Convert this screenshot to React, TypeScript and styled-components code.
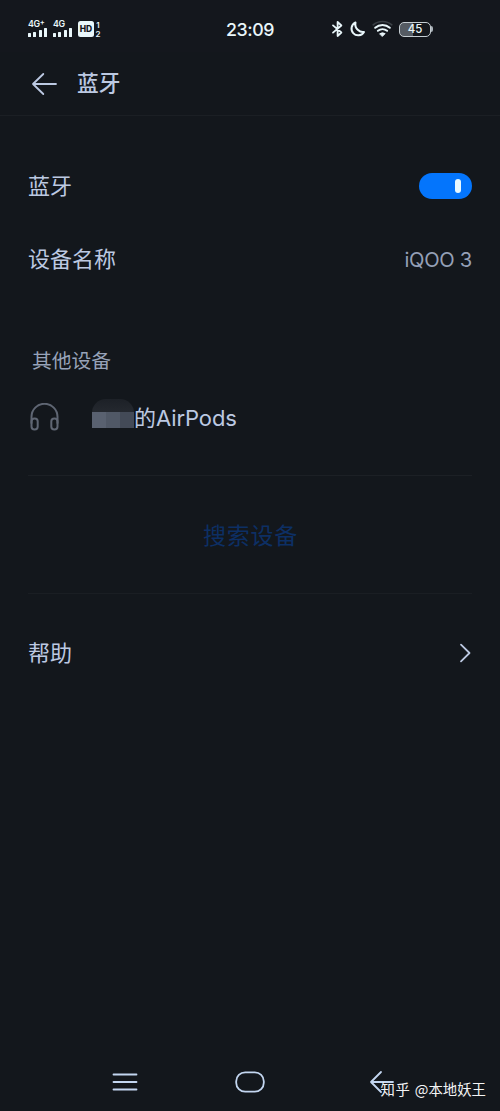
import React from "react";
import styled, { createGlobalStyle } from "styled-components";

const GlobalStyle = createGlobalStyle`
  * { box-sizing: border-box; }
  body { margin: 0; background: #13171c; }
`;

const Screen = styled.div`
  position: relative;
  display: flex;
  flex-direction: column;
  width: 500px;
  height: 1111px;
  overflow: hidden;
  background: #13171c;
  color: #bcc9e2;
  font-family: Inter, "Noto Sans CJK SC", sans-serif;
  white-space: nowrap;
`;

const StatusBar = styled.header`
  display: grid;
  grid-template-columns: 199px 102px 199px;
  align-items: center;
  height: 52px;
  padding-top: 6px;
  background: #14171d;
  color: #e9f6fa;
`;

const StatusGroup = styled.div<{ $start: number }>`
  display: flex;
  align-items: center;
  padding-left: ${(p) => p.$start}px;
`;

const Signal = styled.div`
  display: flex;
  flex-direction: column;
  width: 25px;
  height: 18px;
`;

const Network = styled.span`
  height: 8px;
  font-size: 8.8px;
  font-weight: 600;
  line-height: 7px;
  letter-spacing: -0.3px;
`;

const Plus = styled.sup`
  font-size: 7.5px;
  line-height: 0;
  vertical-align: 2px;
`;

const Bars = styled.div`
  display: flex;
  align-items: flex-end;
  gap: 2.6px;
  height: 9px;
`;

const Bar = styled.i<{ $h: number }>`
  width: 2.8px;
  height: ${(p) => p.$h}px;
  border-radius: 0.5px;
  background: #e9f6fa;
`;

const HdBadge = styled.span`
  width: 16px;
  height: 16px;
  border-radius: 2.5px;
  background: #e9f6fa;
  color: #14171d;
  font-size: 8.5px;
  font-weight: 800;
  line-height: 16px;
  text-align: center;
`;

const SimNumbers = styled.span`
  display: flex;
  flex-direction: column;
  gap: 1px;
  width: 6px;
  margin-left: 1px;
  font-size: 8px;
  font-weight: 600;
  line-height: 8px;
  text-align: center;
`;

const Clock = styled.time`
  padding-top: 1px;
  font-size: 17.8px;
  font-weight: 500;
  line-height: 24px;
  letter-spacing: -0.4px;
  text-align: center;
`;

const Battery = styled.div`
  display: flex;
  align-items: center;
  margin-left: 6px;
`;

const BatteryBody = styled.span`
  width: 32px;
  height: 15px;
  border: 1.5px solid #c5cdd2;
  border-radius: 5px;
  background: linear-gradient(90deg, #555b63 0 45%, #14171d 45%);
  font-size: 11.5px;
  font-weight: 500;
  line-height: 13px;
  text-align: center;
`;

const BatteryTip = styled.i`
  width: 2px;
  height: 6px;
  border-radius: 0 2px 2px 0;
  background: #a9b1b8;
`;

const TitleBar = styled.div`
  display: flex;
  align-items: center;
  gap: 19px;
  height: 64px;
  padding: 0 0 0 31px;
  border-bottom: 1px solid #1b1f24;
`;

const Title = styled.h1`
  margin: 0;
  padding-bottom: 2px;
  font-size: 21.7px;
  font-weight: 500;
  line-height: 32px;
`;

const Content = styled.main`
  flex: 1;
  padding: 34px 28px 0;
`;

const Row = styled.div<{ $height: number }>`
  display: flex;
  align-items: center;
  justify-content: space-between;
  height: ${(p) => p.$height}px;
`;

const Label = styled.span`
  font-size: 22px;
  line-height: 32px;
`;

const DeviceName = styled(Label)`
  letter-spacing: -0.08px;
`;

const Value = styled.span`
  padding-top: 2px;
  color: #95a0b7;
  font-size: 20.2px;
  line-height: 30px;
  letter-spacing: -0.3px;
`;

const Switch = styled.button`
  display: flex;
  align-items: center;
  justify-content: flex-end;
  width: 53px;
  height: 26px;
  padding: 0 11px;
  border: 0;
  border-radius: 13px;
  background: #0475fc;
`;

const Thumb = styled.i`
  width: 6px;
  height: 14px;
  border-radius: 3px;
  background: #e9f9ff;
`;

const SectionTitle = styled.h2`
  margin: 51px 0 0;
  padding-left: 4px;
  color: #97a3b9;
  font-size: 19.8px;
  font-weight: 400;
  line-height: 30px;
`;

const Device = styled.div`
  display: flex;
  align-items: center;
  height: 100px;
  padding: 0 0 15px 2px;
  border-bottom: 1px solid #1c2025;
`;

const HiddenName = styled.span`
  display: flex;
  align-items: flex-end;
  width: 42px;
  height: 29px;
  margin: 0 0 9px 33px;
  border-radius: 14px 14px 0 0;
  background: linear-gradient(#1d2127, #252930 50%, transparent 50%);
`;

const Mosaic = styled.i<{ $tone: string }>`
  flex: 1;
  height: 16px;
  background: ${(p) => p.$tone};
`;

const Search = styled.button`
  display: block;
  width: 100%;
  height: 118px;
  padding: 0 0 1px 1px;
  border: 0;
  border-bottom: 1px solid #1a1e23;
  background: transparent;
  color: #0d2f64;
  font: inherit;
  font-size: 23px;
  letter-spacing: 0.7px;
`;

const NavBar = styled.nav`
  display: flex;
  align-items: center;
  justify-content: space-between;
  height: 58px;
  padding: 0 105px 0 112px;
`;

const Watermark = styled.span`
  position: absolute;
  right: 14px;
  bottom: 12px;
  color: #f3f4f5;
  font-family: "Noto Sans CJK SC", sans-serif;
  font-size: 14.4px;
  line-height: 20px;
  word-spacing: 1px;
`;

const WatermarkBrand = styled.span`
  letter-spacing: 0.7px;
`;

const Icon = styled.svg<{ $gap?: number }>`
  display: block;
  flex: none;
  margin-left: ${(p) => p.$gap ?? 0}px;
  fill: none;
  stroke: currentColor;
  stroke-linecap: round;
  stroke-linejoin: round;
`;

const NavIcon = styled(Icon)`
  color: #c3d6f0;
`;

const HomeIcon = styled(NavIcon)`
  margin-right: 7px;
`;

const HeadphoneIcon = styled(Icon)`
  margin-bottom: 2px;
  color: #5f6673;
`;

function SignalMeter({ plus }: { plus?: boolean }) {
  return (
    <Signal>
      <Network>4G{plus && <Plus>+</Plus>}</Network>
      <Bars>
        {[4, 5.5, 7.5, 9].map((h) => <Bar key={h} $h={h} />)}
      </Bars>
    </Signal>
  );
}

export default function App() {
  return (
    <>
      <GlobalStyle />
      <Screen>
        <StatusBar>
          <StatusGroup $start={28}>
            <SignalMeter plus />
            <SignalMeter />
            <HdBadge>HD</HdBadge>
            <SimNumbers><span>1</span><span>2</span></SimNumbers>
          </StatusGroup>
          <Clock>23:09</Clock>
          <StatusGroup $start={30}>
            <Icon width="13" height="18" viewBox="0 0 13 18" strokeWidth="1.8">
              <path d="M2 5.4 10.4 12.5 6.6 16V2L10.4 5.5 2 12.6" />
            </Icon>
            <Icon $gap={5} width="17" height="18" viewBox="0 0 17 18" strokeWidth="2">
              <path d="M6.5 2.5A6.7 6.7 0 1 0 15 12C10.9 12.8 5.2 8.4 6.5 2.5Z" />
            </Icon>
            <Icon $gap={6} width="21" height="18" viewBox="0 0 21 18" strokeWidth="2">
              <path d="M1.2 4.8C6.3.4 14.7.4 19.8 4.8" stroke="#3b4046" strokeWidth="1.7" />
              <path d="M3.2 7.8c4.2-3.7 10.4-3.7 14.6 0M5.9 10.8c2.7-2.2 6.5-2.2 9.2 0" />
              <path d="M7.9 13.6q2.6-1.6 5.2 0L10.5 16.2Z" fill="currentColor" strokeWidth="1" />
            </Icon>
            <Battery>
              <BatteryBody>45</BatteryBody>
              <BatteryTip />
            </Battery>
          </StatusGroup>
        </StatusBar>
        <TitleBar>
          <Icon width="27" height="24" viewBox="0 0 27 24" strokeWidth="1.8">
            <path d="M25 12H2M12.3 2 2 12l10.3 10" />
          </Icon>
          <Title>蓝牙</Title>
        </TitleBar>
        <Content>
          <Row $height={72}>
            <Label>蓝牙</Label>
            <Switch aria-label="蓝牙"><Thumb /></Switch>
          </Row>
          <Row $height={73}>
            <Label>设备名称</Label>
            <Value>iQOO 3</Value>
          </Row>
          <SectionTitle>其他设备</SectionTitle>
          <Device>
            <HeadphoneIcon width="29" height="28" viewBox="0 0 29 28" strokeWidth="2">
              <path d="M1.5 20V13.8a13 13 0 0 1 26 0V20" />
              <rect x="1.5" y="15.5" width="6.2" height="11" rx="3" />
              <rect x="21.3" y="15.5" width="6.2" height="11" rx="3" />
            </HeadphoneIcon>
            <HiddenName>
              <Mosaic $tone="#596170" />
              <Mosaic $tone="#505866" />
              <Mosaic $tone="#434a57" />
            </HiddenName>
            <DeviceName>的AirPods</DeviceName>
          </Device>
          <Search>搜索设备</Search>
          <Row $height={117}>
            <Label>帮助</Label>
            <Icon width="13" height="20" viewBox="0 0 13 20" strokeWidth="1.8">
              <path d="m2 1.7 8.5 8.3L2 18.3" />
            </Icon>
          </Row>
        </Content>
        <NavBar>
          <NavIcon width="26" height="20" viewBox="0 0 26 20" strokeWidth="1.8">
            <path d="M1.5 2.5h23M1.5 10h23M1.5 17.5h23" />
          </NavIcon>
          <HomeIcon width="30" height="22" viewBox="0 0 30 22" strokeWidth="1.8">
            <rect x="1.2" y="1.3" width="27.6" height="19.4" rx="9" />
          </HomeIcon>
          <NavIcon width="26" height="24" viewBox="0 0 26 24" strokeWidth="1.8">
            <path d="M24 12H2M12 2 2 12l10 10" />
          </NavIcon>
        </NavBar>
        <Watermark><WatermarkBrand>知乎</WatermarkBrand> @本地妖王</Watermark>
      </Screen>
    </>
  );
}
